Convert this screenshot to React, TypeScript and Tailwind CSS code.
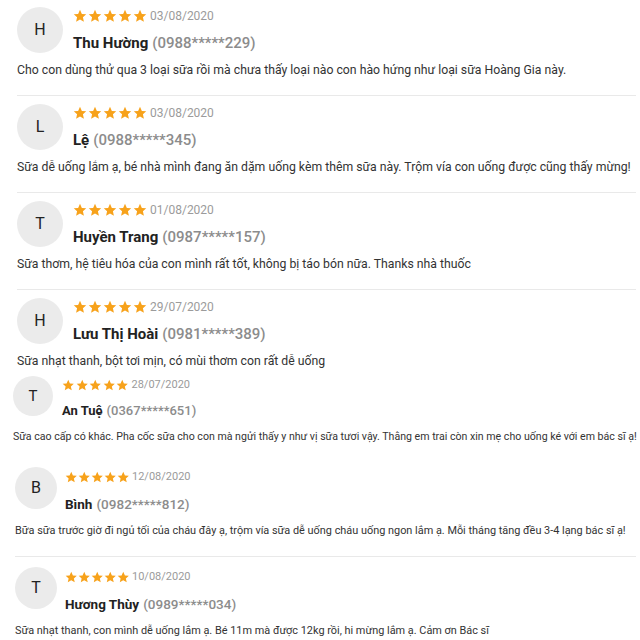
import { clsx } from "clsx"

type Size = "lg" | "sm" | "md"

type Review = {
  initial: string
  name: string
  phone: string
  date: string
  text: string
  size: Size
  left: string
  top: string
  bottom: string
  divider: boolean
}

const sizes = {
  lg: {
    gap: "gap-[10px]",
    avatar: "w-[46px] h-[46px] text-[16px]",
    star: 14,
    stars: "h-[18px] gap-[1px]",
    date: "text-[12px]",
    nameRow: "h-[20px] mt-[8px]",
    name: "text-[15px]",
    text: "text-[12.25px] leading-[18px] mt-[8px]",
  },
  sm: {
    gap: "gap-[9px]",
    avatar: "w-[40px] h-[40px] text-[15px] mt-[4px]",
    star: 12.5,
    stars: "h-[18px] mt-[4px] gap-[1px]",
    date: "text-[11px]",
    nameRow: "h-[18px] mt-[8px]",
    name: "text-[13px]",
    text: "text-[10.6px] leading-[16px] mt-[9px]",
  },
  md: {
    gap: "gap-[8px]",
    avatar: "w-[42px] h-[42px] text-[16px]",
    star: 12.5,
    stars: "h-[18px] mt-[1px] gap-[0.5px]",
    date: "text-[11px]",
    nameRow: "h-[20px] mt-[8px]",
    name: "text-[13.5px]",
    text: "text-[10.9px] leading-[18px] mt-[8px]",
  },
}

const reviews: Review[] = [
  {
    initial: "H",
    name: "Thu Hường",
    phone: "(0988*****229)",
    date: "03/08/2020",
    text: "Cho con dùng thử qua 3 loại sữa rồi mà chưa thấy loại nào con hào hứng như loại sữa Hoàng Gia này.",
    size: "lg",
    left: "pl-[17px]",
    top: "pt-[7px]",
    bottom: "pb-[16px]",
    divider: true,
  },
  {
    initial: "L",
    name: "Lệ",
    phone: "(0988*****345)",
    date: "03/08/2020",
    text: "Sữa dễ uống lắm ạ, bé nhà mình đang ăn dặm uống kèm thêm sữa này. Trộm vía con uống được cũng thấy mừng!",
    size: "lg",
    left: "pl-[17px]",
    top: "pt-[8px]",
    bottom: "pb-[16px]",
    divider: true,
  },
  {
    initial: "T",
    name: "Huyền Trang",
    phone: "(0987*****157)",
    date: "01/08/2020",
    text: "Sữa thơm, hệ tiêu hóa của con mình rất tốt, không bị táo bón nữa. Thanks nhà thuốc",
    size: "lg",
    left: "pl-[17px]",
    top: "pt-[8px]",
    bottom: "pb-[16px]",
    divider: true,
  },
  {
    initial: "H",
    name: "Lưu Thị Hoài",
    phone: "(0981*****389)",
    date: "29/07/2020",
    text: "Sữa nhạt thanh, bột tơi mịn, có mùi thơm con rất dễ uống",
    size: "lg",
    left: "pl-[17px]",
    top: "pt-[8px]",
    bottom: "pb-[2px]",
    divider: false,
  },
  {
    initial: "T",
    name: "An Tuệ",
    phone: "(0367*****651)",
    date: "28/07/2020",
    text: "Sữa cao cấp có khác. Pha cốc sữa cho con mà ngửi thấy y như vị sữa tươi vậy. Thằng em trai còn xin mẹ cho uống ké với em bác sĩ ạ!",
    size: "sm",
    left: "pl-[13px]",
    top: "pt-[0px]",
    bottom: "pb-[14px]",
    divider: false,
  },
  {
    initial: "B",
    name: "Bình",
    phone: "(0982*****812)",
    date: "12/08/2020",
    text: "Bữa sữa trước giờ đi ngủ tối của cháu đây ạ, trộm vía sữa dễ uống cháu uống ngon lắm ạ. Mỗi tháng tăng đều 3-4 lạng bác sĩ ạ!",
    size: "md",
    left: "pl-[15px]",
    top: "pt-[8px]",
    bottom: "pb-[16px]",
    divider: true,
  },
  {
    initial: "T",
    name: "Hương Thùy",
    phone: "(0989*****034)",
    date: "10/08/2020",
    text: "Sữa nhạt thanh, con mình dễ uống lắm ạ. Bé 11m mà được 12kg rồi, hi mừng lắm ạ. Cảm ơn Bác sĩ",
    size: "md",
    left: "pl-[15px]",
    top: "pt-[10px]",
    bottom: "pb-[0px]",
    divider: false,
  },
]

function Star({ size }: { size: number }) {
  return (
    <svg width={size} height={size} viewBox="0 0 24 24" className="shrink-0">
      <path
        d="M12 1.4l3.2 7 7.5.7-5.7 5.1 1.7 7.5L12 17.9l-6.7 3.8 1.7-7.5-5.7-5.1 7.5-.7z"
        fill="#f7a21b"
      />
    </svg>
  )
}

function ReviewItem({ r }: { r: Review }) {
  const s = sizes[r.size]
  return (
    <div className={clsx(r.left, r.top, "pr-[4px]")}>
      <div className={clsx("flex", s.gap)}>
        <div
          className={clsx(
            "rounded-full bg-[#ebebeb] flex items-center justify-center text-[#222] shrink-0",
            s.avatar
          )}
        >
          {r.initial}
        </div>
        <div className="flex flex-col">
          <div className={clsx("flex items-center", s.stars)}>
            {[0, 1, 2, 3, 4].map((i) => (
              <Star key={i} size={s.star} />
            ))}
            <span className={clsx("text-[#9b9b9b] ml-[2px]", s.date)}>{r.date}</span>
          </div>
          <div className={clsx("flex items-center", s.nameRow)}>
            <span className={clsx("font-bold text-[#222]", s.name)}>{r.name}</span>
            <span className={clsx("font-medium text-[#8c8c8c] ml-[4px]", s.name)}>{r.phone}</span>
          </div>
        </div>
      </div>
      <p className={clsx("text-[#333] whitespace-nowrap", s.text, r.bottom)}>{r.text}</p>
      {r.divider && <div className="h-px bg-[#e9e9e9]" />}
    </div>
  )
}

export default function App() {
  return (
    <div className="w-[640px] h-[640px] overflow-hidden bg-white font-['Roboto',sans-serif]">
      {reviews.map((r, i) => (
        <ReviewItem key={i} r={r} />
      ))}
    </div>
  )
}
